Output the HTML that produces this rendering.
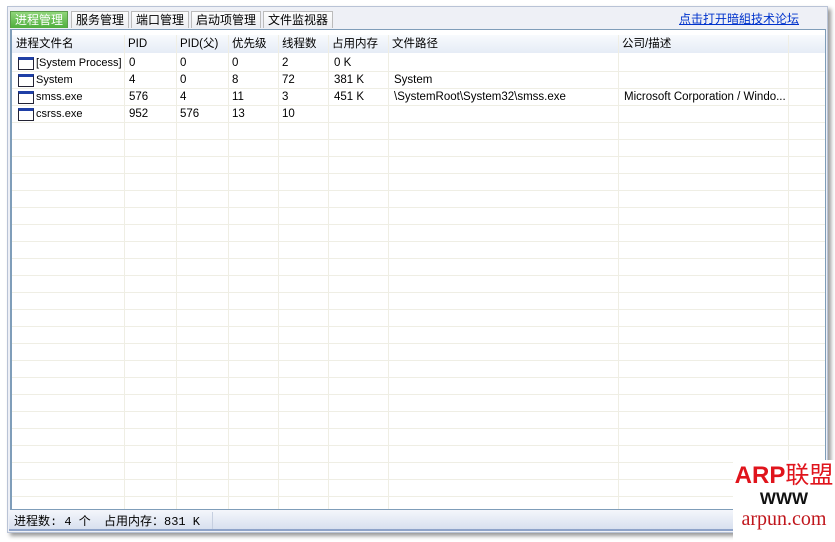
<!DOCTYPE html>
<html><head><meta charset="utf-8"><style>
*{margin:0;padding:0;box-sizing:border-box}
body{width:835px;height:542px;background:#fff;position:relative;overflow:hidden;font-family:"Liberation Sans","Noto Sans CJK SC","WenQuanYi Zen Hei",sans-serif;font-size:12px;color:#000}
.abs{position:absolute}
.win{left:7px;top:6px;width:821px;height:527px;background:#eef0f6;border:1px solid #b9c3d6;box-shadow:3px 3px 4px #999}
.tab{position:absolute;top:11px;height:17px;line-height:16px;padding:0 4px;background:linear-gradient(#fdfdfd,#eceef2);border:1px solid #bbb;border-bottom:none;font-size:12px;white-space:nowrap}
.tab.act{background:linear-gradient(#8fd57a,#4fae3d);color:#fff;border-color:#5a9a4a}
.panel{left:10px;top:29px;width:816px;height:481px;background:#fff;border:1px solid #7f9db9;border-left:2px solid #7f9db9;overflow:hidden}
.hdr{position:absolute;left:0;top:5px;width:814px;height:18px;background:linear-gradient(#f8fafd,#e6ecf6)}
.row{position:absolute;left:0;width:814px;height:17px;border-bottom:1px solid #efeee4}
.vl{position:absolute;top:5px;bottom:0;width:1px;background:#efeee4}
.c{position:absolute;white-space:nowrap;font-size:11.5px;line-height:17px}
.ico{position:absolute;left:6px;width:16px;height:13px;border:1px solid #223;border-top:3px solid #1f3fa6;background:#fff;top:2px}
.status{left:9px;top:510px;width:817px;height:21px;background:linear-gradient(#f4f6fb,#d8e0ef);border-bottom:2px solid #8ea3c9}
</style></head><body>
<div class="abs win"></div>
<div class="tab act" style="left:10px">进程管理</div>
<div class="tab" style="left:71px">服务管理</div>
<div class="tab" style="left:131px">端口管理</div>
<div class="tab" style="left:191px">启动项管理</div>
<div class="tab" style="left:263px">文件监视器</div>
<div class="abs" style="left:679px;top:10px;color:#0033cc;text-decoration:underline;font-size:12px">点击打开暗組技术论坛</div>
<div class="abs panel">
<div class="hdr"></div>
<div class="vl" style="left:112px"></div><div class="vl" style="left:164px"></div><div class="vl" style="left:216px"></div><div class="vl" style="left:266px"></div><div class="vl" style="left:316px"></div><div class="vl" style="left:376px"></div><div class="vl" style="left:606px"></div><div class="vl" style="left:776px"></div>
<div class="c" style="top:6px;left:4px">进程文件名</div><div class="c" style="top:6px;left:116px">PID</div><div class="c" style="top:6px;left:168px">PID(父)</div><div class="c" style="top:6px;left:220px">优先级</div><div class="c" style="top:6px;left:270px">线程数</div><div class="c" style="top:6px;left:320px">占用内存</div><div class="c" style="top:6px;left:380px">文件路径</div><div class="c" style="top:6px;left:610px">公司/描述</div>
<div id="rows"></div>
</div>
<div class="abs status"></div>
<div class="abs" style="left:212px;top:512px;width:1px;height:17px;background:#c6cfe0"></div>
<div class="abs" style="left:14px;top:512px;font-size:12px;font-family:'Liberation Mono','Noto Sans CJK SC',monospace">进程数: 4 个</div>
<div class="abs" style="left:104px;top:512px;font-size:12px;font-family:'Liberation Mono','Noto Sans CJK SC',monospace">占用内存：831 K</div>
<div class="abs" style="left:733px;top:460px;width:102px;height:82px;background:#fff;text-align:center">
<div style="color:#e0141c;font-weight:bold;font-size:24px;line-height:28px;margin-top:2px">ARP<span style="font-weight:normal">联盟</span></div>
<div style="font-weight:bold;font-size:17px;line-height:18px;color:#111">WWW</div>
<div style="color:#c0161c;font-family:'Liberation Serif',serif;font-size:20px;line-height:22px">arpun.com</div>
</div>
<script>
var d=[["[System Process]","0","0","0","2","0 K","",""],["System","4","0","8","72","381 K","System",""],["smss.exe","576","4","11","3","451 K","\\SystemRoot\\System32\\smss.exe","Microsoft Corporation / Windo..."],["csrss.exe","952","576","13","10","","",""]];
var x=[24,117,168,220,270,322,382,612],h="";
for(var i=0;i<27;i++){var t=25+i*17;h+='<div class="row" style="top:'+t+'px"></div>';if(i<4){h+='<div class="ico" style="top:'+(t+2)+'px"></div>';for(var j=0;j<8;j++)h+='<div class="c" style="top:'+t+'px;left:'+x[j]+'px;font-size:'+(j==0?'11px':'11.5px')+'">'+d[i][j]+'</div>';}}
document.getElementById("rows").innerHTML=h;
</script>
</body></html>
